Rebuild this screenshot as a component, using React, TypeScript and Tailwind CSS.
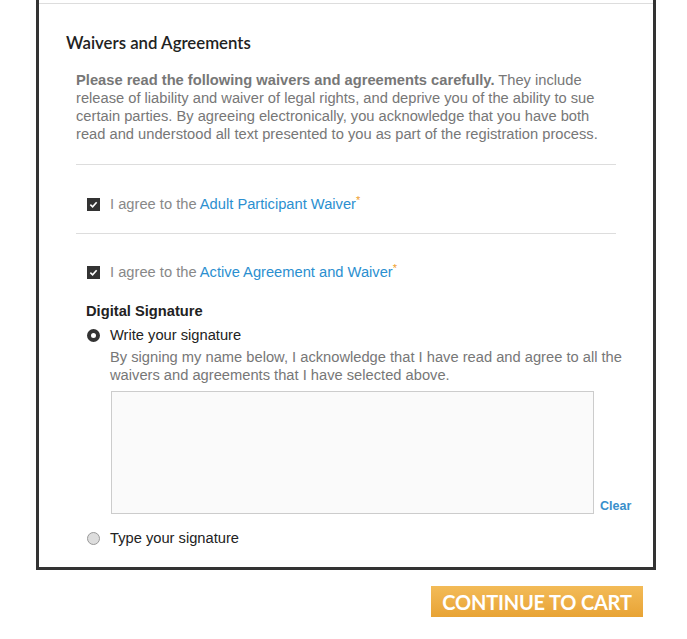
export default function App() {
  return (
    <div className="min-h-screen bg-white font-['Liberation_Sans',Arial,sans-serif]">
      <div className="ml-[36px] w-[620px] border-x-[3px] border-b-[3px] border-[#333]">
        <div className="h-[4px] border-b border-[#ddd]" />
        <div className="pl-[27px] pr-[37px] pt-[29px] pb-[19px]">
          <h2 className="font-['Lato',sans-serif] text-[16.8px] leading-[20px] font-semibold text-[#222]">
            Waivers and Agreements
          </h2>
          <div className="ml-[10px] mt-[18px]">
            <p className="w-[525px] text-[14.7px] leading-[18px] text-[#777]">
              <b>Please read the following waivers and agreements carefully.</b> They include release of
              liability and waiver of legal rights, and deprive you of the ability to sue certain parties.
              By agreeing electronically, you acknowledge that you have both read and understood all text
              presented to you as part of the registration process.
            </p>
            <div className="mt-[21px] border-t border-[#ddd]" />
            <AgreeRow label="Adult Participant Waiver" top="mt-[29px]" />
            <div className="mt-[19px] border-t border-[#ddd]" />
            <AgreeRow label="Active Agreement and Waiver" top="mt-[28px]" />
            <div className="ml-[10px] mt-[19px]">
              <div className="text-[14.7px] leading-[20px] font-bold text-[#222]">Digital Signature</div>
              <label className="ml-[1px] mt-[4px] flex items-center gap-[10px] text-[14.7px] leading-[20px] text-[#222]">
                <span className="h-[13px] w-[13px] shrink-0 rounded-full border-[4px] border-[#333] bg-white" />
                Write your signature
              </label>
              <p className="ml-[24px] mt-[3px] w-[515px] text-[14.7px] leading-[18px] text-[#777]">
                By signing my name below, I acknowledge that I have read and agree to all the waivers and
                agreements that I have selected above.
              </p>
              <div className="ml-[25px] mt-[7px] flex items-end gap-[6px]">
                <div className="h-[123px] w-[483px] shrink-0 border border-[#ccc] bg-[#fafafa]" />
                <button className="mb-[1px] shrink-0 text-[12.5px] leading-[14px] font-bold text-[#3a8fcb]">Clear</button>
              </div>
              <label className="ml-[1px] mt-[14px] flex items-center gap-[10px] text-[14.7px] leading-[20px] text-[#222]">
                <span className="h-[13px] w-[13px] shrink-0 rounded-full border border-[#999] bg-[#ddd]" />
                Type your signature
              </label>
            </div>
          </div>
        </div>
      </div>
      <div className="ml-[36px] flex w-[620px] justify-end pr-[13px] pt-[16px]">
        <button className="h-[31px] w-[212px] bg-gradient-to-b from-[#f3bb57] to-[#e8a334] font-['Lato',sans-serif] text-[20px] font-bold tracking-[-0.2px] text-white">
          CONTINUE TO CART
        </button>
      </div>
    </div>
  );
}

function AgreeRow({ label, top }: { label: string; top: string }) {
  return (
    <div className={`ml-[11px] flex items-center gap-[10px] text-[14.7px] leading-[20px] ${top}`}>
      <span className="flex h-[13px] w-[13px] shrink-0 items-center justify-center bg-[#333]">
        <svg viewBox="0 0 10 10" className="h-[9px] w-[9px]">
          <path d="M1.5 5.2 L4 7.5 L8.5 2.5" fill="none" stroke="white" strokeWidth="1.8" />
        </svg>
      </span>
      <span className="text-[#888]">
        I agree to the <a className="text-[#2b8fd0]">{label}</a>
        <sup className="text-[#f0a030]">*</sup>
      </span>
    </div>
  );
}
